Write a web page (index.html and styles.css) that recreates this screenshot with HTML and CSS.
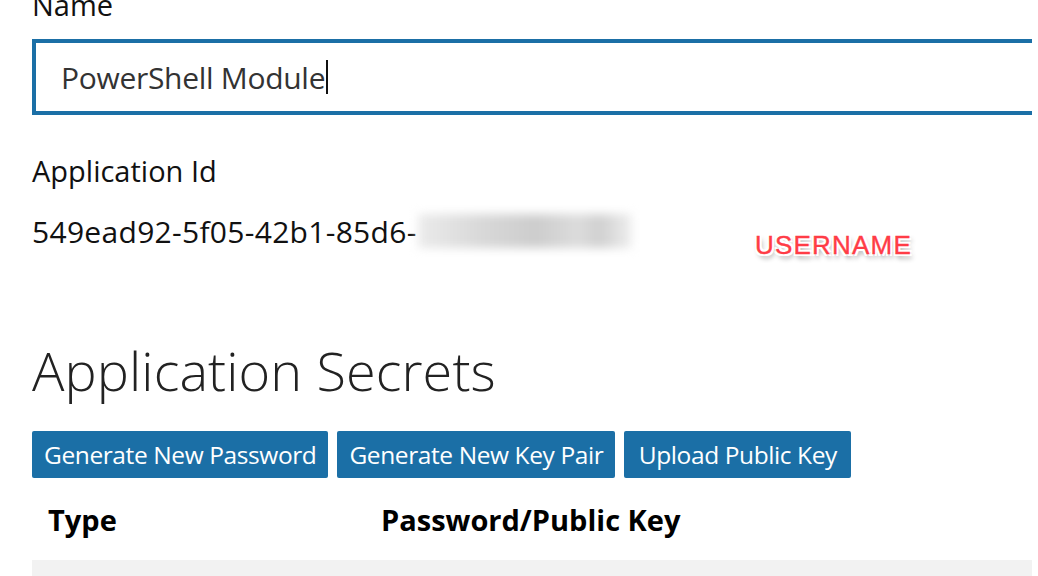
FILE: index.html
```html
<!DOCTYPE html>
<html>
 <head>
  <title>Application registration</title>
  <link rel="stylesheet" href="styles.css">
 </head>
 <body>
  <div class="page">
   <div class="field-label name-label">Name</div>
   <div class="text-box"><span class="value">PowerShell Module</span><span class="caret"></span></div>

   <div class="field-label id-label">Application Id</div>
   <div class="id-row">
    <span class="app-id">549ead92-5f05-42b1-85d6-</span><span class="blurred"></span>
    <span class="stamp">USERNAME</span>
   </div>

   <h1 class="section-title">Application Secrets</h1>

   <div class="actions">
    <button class="btn">Generate New Password</button>
    <button class="btn">Generate New Key Pair</button>
    <button class="btn btn-upload">Upload Public Key</button>
   </div>

   <table class="secrets">
    <tr>
     <th class="col-type">Type</th>
     <th>Password/Public Key</th>
    </tr>
    <tr class="row-empty">
     <td></td>
     <td></td>
    </tr>
   </table>
  </div>
 </body>
</html>
```

FILE: styles.css
```css
html, body { margin: 0; padding: 0; background: #fff; overflow: hidden; }
body
{
 font-family: "Open Sans", "Noto Sans", sans-serif;
 color: #111;
 width: 1038px;
 height: 576px;
}
.page
{
 margin-left: 32px;
 width: 1000px;
}
.field-label
{
 font-size: 29px;
 line-height: 36px;
}
.name-label { margin-top: -13px; }
.text-box
{
 margin-top: 16px;
 height: 68px;
 border: 4px solid #1b6fa6;
 border-right: 0;
 display: flex;
 align-items: center;
 padding-left: 25px;
}
.value
{
 font-size: 30px;
 color: #333;
 letter-spacing: -0.3px;
}
.caret
{
 display: inline-block;
 width: 2px;
 height: 34px;
 background: #111;
 margin-left: 1px;
}
.id-label { margin-top: 38px; }
.id-row
{
 margin-top: 22px;
 height: 40px;
 display: flex;
 align-items: center;
 font-size: 30px;
 position: relative;
}
.app-id { letter-spacing: 0.3px; }
.blurred
{
 display: inline-block;
 width: 214px;
 height: 34px;
 margin-left: 1px;
 background: linear-gradient(90deg, #ebebeb 0%, #d8d8d8 30%, #cdcdcd 55%, #dcdcdc 75%, #d0d0d0 85%, #efefef 100%);
 filter: blur(5px);
}
.stamp
{
 position: absolute;
 left: 723px;
 top: 19px;
 font-family: "Liberation Sans", Arial, sans-serif;
 font-size: 26px;
 letter-spacing: 1.2px;
 color: #ff3c46;
 -webkit-text-stroke: 0.4px #ff3c46;
 text-shadow: -2px -2px 0 #fff, 2px -2px 0 #fff, -2px 2px 0 #fff, 2px 2px 0 #fff, 2px 4px 5px rgba(0,0,0,0.45);
}
.section-title
{
 margin: 83px 0 0 0;
 font-size: 54px;
 font-weight: 300;
 line-height: 72px;
 color: #222;
 letter-spacing: 0.1px;
}
.actions
{
 margin-top: 25px;
 display: flex;
 gap: 9px;
}
.btn
{
 font-family: "Open Sans", "Noto Sans", sans-serif;
 font-size: 24.5px;
 color: #fff;
 background: #1b6fa6;
 border: 0;
 border-radius: 2px;
 height: 47px;
 padding: 0 12px;
 letter-spacing: -0.4px;
}
.btn-upload { min-width: 227px; }
.secrets
{
 width: 1000px;
 border-collapse: collapse;
 margin-top: 20px;
}
.secrets th
{
 text-align: left;
 font-size: 29px;
 font-weight: 700;
 color: #000;
 padding: 4px 16px 22px 16px;
 line-height: 36px;
}
.secrets th.col-type { width: 301px; }
.row-empty td
{
 background: #f2f2f2;
 height: 40px;
 padding: 0;
}
```
